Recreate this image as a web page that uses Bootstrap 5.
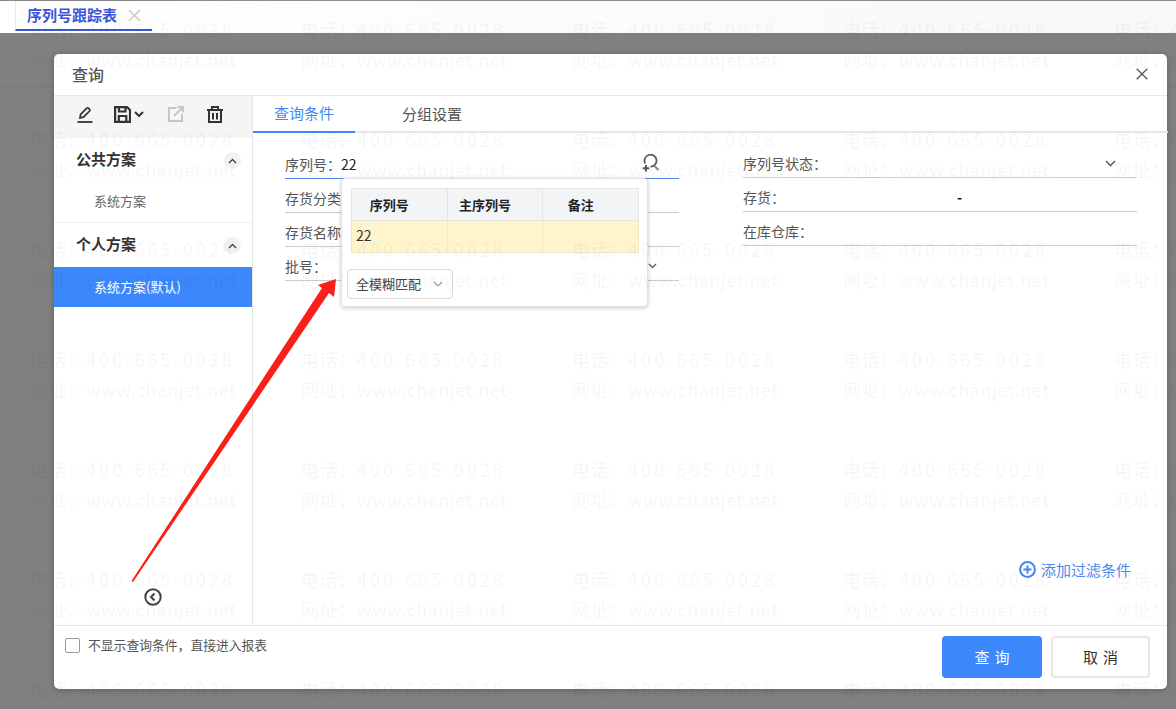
<!DOCTYPE html>
<html lang="zh">
<head>
<meta charset="utf-8">
<title>序列号跟踪表</title>
<link href="https://cdn.jsdelivr.net/npm/bootstrap@5.3.0/dist/css/bootstrap.min.css" rel="stylesheet">
<style>
html,body{height:100%;margin:0;overflow:hidden}
body{font-family:"Noto Sans CJK SC","Liberation Sans",sans-serif;font-size:14px;color:#555;background:#808080}
.shell{position:relative;width:1176px;height:709px;overflow:hidden}
.topbar{height:33px;background:linear-gradient(90deg,#fff,#f8f8f8);border-top:1px solid #8a8a8a;padding-left:15px}
.toptab{width:137px;height:30px;border-left:1px solid #e8e8e8;border-bottom:2px solid #3a55d8;padding-left:11px;gap:11px;color:#3a55d8;font-size:15px;font-weight:700;line-height:26px}
.veil{height:676px;padding:21px 9px 20px 54px;background:linear-gradient(#808080 53px,#777 53px,#777 54px,#808080 54px)}
.dlg{height:635px;background:#fff;border-radius:5px;box-shadow:0 1px 6px rgba(0,0,0,.25)}
.dlg-head{height:42px;padding:0 19px 2px 18px;border-bottom:1px solid #e8e8e8}
.dlg-title{font-size:16px;font-weight:500;color:#555}
.dlg-mid{height:529px}
.side{width:199px;border-right:1px solid #e8e8e8}
.tools{height:42px;background:#f5f5f5;padding:0 0 6px 23px}
.ic-pen{margin-right:21px}
.ic-caret{margin:0 24px 0 3px}
.ic-out{margin-right:23px}
.grp{height:42px;padding:0 11px 0 22px;font-size:15px;font-weight:700;color:#333}
.grp-b{height:44px;padding-bottom:2px}
.knob{width:17px;height:17px;margin-top:3px;border-radius:50%;background:#f1f1f1}
.plan{height:40px;padding-left:40px;padding-bottom:1px;font-size:13px;color:#666}
.plan-on{background:#3b87fb;color:#fff}
.plan-a{height:42px}
.sep{border-top:1px solid #f0f0f0}
.collapse-row{height:50px;padding-left:90px;padding-bottom:6px}
.tabs{height:37px;border-bottom:2px solid #e6e6e6}
.tabx{width:102px;height:37px;margin-bottom:-2px;font-size:15px;color:#555}
.tabx-b{margin-left:26px}
.tabx-on{color:#3f87f5;border-bottom:2px solid #3f87f5}
.fields{padding:12px 31px 0 32px;gap:64px}
.fcol{width:394px}
.fcol-r{margin-top:-1px}
.frow{height:34px;border-bottom:1px solid #ccc;padding:6px 0 1px}
.frow-on{border-bottom-color:#4a8af0}
.val{color:#222}
.dash{position:absolute;left:214px;color:#111;font-weight:700}
.find{margin-right:19px;margin-top:-2px}
.chev-l{margin-right:22px}
.chev-r{margin-right:21px}
.popup{position:absolute;left:56px;top:33px;width:307px;height:129px;background:#fff;border:1px solid #e2e2e2;border-radius:4px;box-shadow:0 1px 4px rgba(0,0,0,.22);padding:9px 9px 0 9px}
.popup .tbl{width:288px;margin:0;border-collapse:collapse;table-layout:fixed;font-size:13px}
.tbl th{height:32px;background:#f3f4f6;border:1px solid #e6e6e6;text-align:center;padding:0 20px 0 0;color:#222;font-weight:700}
.tbl td{height:32px;background:#fff5cc;border:1px solid #efe8c8;padding:0 0 2px 4px;color:#333;font-size:14px}
.picker{width:106px;height:30px;margin:16px 0 0 -4px;border:1px solid #ddd;border-radius:4px;padding:0 9px 0 8px;font-size:13px;color:#444}
.addf{padding:0 37px 44px 0;color:#4a8af0;font-size:15px;gap:5px}
.dlg-foot{height:64px;border-top:1px solid #e8e8e8;padding:10px 17px 0 11px}
.tick{width:15px;height:15px;border:1px solid #999;border-radius:2px;margin-right:8px}
.foot-label{font-size:12.800px;color:#555;margin-top:-1px}
.btn-q,.btn-c{height:42px;border-radius:4px;font-size:15px;letter-spacing:5px;padding:0 0 0 5px}
.btn-q{width:100px;background:#3b87fb;border:0;color:#fff;margin-right:9px}
.btn-c{width:99px;background:#fff;border:2px solid #e6e6e6;color:#333}
.wm{position:absolute;inset:0;padding:14px 0 0 30px;display:grid;grid-template-columns:repeat(5,271px);grid-auto-rows:110px;pointer-events:none;font-size:18px;font-weight:500;line-height:30px;letter-spacing:.6px;color:rgba(0,0,0,.045);white-space:nowrap;overflow:hidden}
.wm-num{letter-spacing:2.800px}
.wm-url{letter-spacing:.25px}
.arrow{position:absolute;left:0;top:0;pointer-events:none}
</style>
</head>
<body>
<div class="shell">
  <div class="topbar">
    <div class="toptab d-flex align-items-center">
      <span>序列号跟踪表</span>
      <svg width="13" height="13" viewBox="0 0 13 13"><path d="M1 1l11 11M12 1L1 12" stroke="#c8c8c8" stroke-width="1.400" fill="none"/></svg>
    </div>
  </div>
  <div class="veil">
    <div class="dlg d-flex flex-column">
      <div class="dlg-head d-flex align-items-center justify-content-between">
        <div class="dlg-title">查询</div>
        <svg width="12" height="12" viewBox="0 0 12 12"><path d="M.7.7l10.600 10.600M11.300.7L.7 11.300" stroke="#555" stroke-width="1.300" fill="none"/></svg>
      </div>
      <div class="dlg-mid d-flex">
        <div class="side d-flex flex-column flex-shrink-0">
          <div class="tools d-flex align-items-center">
            <svg class="ic-pen" width="16" height="17" viewBox="0 0 16 17" fill="none" stroke="#333"><path d="M3 12l.6-3.600L9.800 2.200a1.200 1.200 0 0 1 1.700 0l1.100 1.100a1.200 1.200 0 0 1 0 1.700L6.400 11.200z" stroke-width="1.700"/><path d="M0.500 16h15" stroke-width="1.800"/></svg>
            <svg width="17" height="17" viewBox="0 0 17 17" fill="none" stroke="#333" stroke-width="2.200"><path d="M1.100 1.100h12L16 4v11.900H1.100z"/><path d="M5 1.100v4.400h6.500V1.100M4.800 15.900V10h7.500v5.900"/></svg>
            <svg class="ic-caret" width="10" height="6" viewBox="0 0 10 6" fill="none" stroke="#333" stroke-width="2"><path d="M1 1l4 4 4-4"/></svg>
            <svg class="ic-out" width="16" height="16" viewBox="0 0 16 16" fill="none" stroke="#c6c6c6" stroke-width="2"><path d="M8.500 2H1v13h13V8"/><path d="M6 10l8.500-8.500M9.500 1.100H15v5.500"/></svg>
            <svg width="16" height="17" viewBox="0 0 16 17" fill="none" stroke="#333" stroke-width="2"><path d="M0 4h16M5 4V1.100h6V4M2 4v12h12V4M6 7v6.500M10 7v6.500"/></svg>
          </div>
          <div class="grp d-flex align-items-center justify-content-between">
            <span>公共方案</span>
            <span class="knob d-flex align-items-center justify-content-center"><svg width="9" height="6" viewBox="0 0 9 6" fill="none" stroke="#444" stroke-width="1.400"><path d="M1 5l3.500-3.500L8 5"/></svg></span>
          </div>
          <div class="plan plan-a d-flex align-items-center">系统方案</div>
          <div class="sep"></div>
          <div class="grp grp-b d-flex align-items-center justify-content-between">
            <span>个人方案</span>
            <span class="knob d-flex align-items-center justify-content-center"><svg width="9" height="6" viewBox="0 0 9 6" fill="none" stroke="#444" stroke-width="1.400"><path d="M1 5l3.500-3.500L8 5"/></svg></span>
          </div>
          <div class="plan plan-on d-flex align-items-center">系统方案(默认)</div>
          <div class="collapse-row mt-auto d-flex align-items-center">
            <svg width="18" height="18" viewBox="0 0 18 18" fill="none" stroke="#444"><circle cx="9" cy="9" r="7.700" stroke-width="2"/><path d="M10.500 5.500L7 9l3.500 3.500" stroke-width="2"/></svg>
          </div>
        </div>
        <div class="flex-grow-1 d-flex flex-column">
          <div class="tabs d-flex">
            <div class="tabx tabx-on d-flex align-items-center justify-content-center">查询条件</div>
            <div class="tabx tabx-b d-flex align-items-center justify-content-center">分组设置</div>
          </div>
          <div class="fields d-flex">
            <div class="fcol position-relative">
              <div class="frow frow-on d-flex align-items-center justify-content-between">
                <span>序列号：<span class="val">22</span></span>
                <svg class="find" width="18" height="18" viewBox="0 0 18 18" fill="none" stroke="#555" stroke-width="1.700"><path d="M3.200 9.500A6 6 0 1 1 8.500 12.700"/><path d="M12 11.500l4.500 4.500" stroke="#888" stroke-width="2"/><path d="M4 11v6.500M.8 14.200h6.400" stroke-width="1.900"/></svg>
              </div>
              <div class="frow d-flex align-items-center">存货分类</div>
              <div class="frow d-flex align-items-center">存货名称</div>
              <div class="frow d-flex align-items-center justify-content-between">
                <span>批号：</span>
                <svg class="chev-l" width="9" height="6" viewBox="0 0 9 6" fill="none" stroke="#666" stroke-width="1.500"><path d="M1 1l3.500 3.500L8 1"/></svg>
              </div>
              <div class="popup">
                <table class="tbl">
                  <thead><tr><th>序列号</th><th>主序列号</th><th>备注</th></tr></thead>
                  <tbody><tr><td>22</td><td></td><td></td></tr></tbody>
                </table>
                <div class="picker d-flex align-items-center justify-content-between">
                  <span>全模糊匹配</span>
                  <svg width="10" height="6" viewBox="0 0 10 6" fill="none" stroke="#999" stroke-width="1.100"><path d="M1 1l4 4 4-4"/></svg>
                </div>
              </div>
            </div>
            <div class="fcol fcol-r">
              <div class="frow d-flex align-items-center justify-content-between">
                <span>序列号状态：</span>
                <svg class="chev-r" width="11" height="7" viewBox="0 0 11 7" fill="none" stroke="#666" stroke-width="1.700"><path d="M1 1l4.500 4.500L10 1"/></svg>
              </div>
              <div class="frow d-flex align-items-center position-relative"><span>存货：</span><span class="dash">-</span></div>
              <div class="frow d-flex align-items-center">在库仓库：</div>
            </div>
          </div>
          <div class="addf mt-auto d-flex align-items-center justify-content-end">
            <svg width="17" height="17" viewBox="0 0 17 17" fill="none" stroke="#3f87f5" stroke-width="2"><circle cx="8.500" cy="8.500" r="7.400"/><path d="M4.500 8.500h8M8.500 4.500v8"/></svg>
            <span>添加过滤条件</span>
          </div>
        </div>
      </div>
      <div class="dlg-foot d-flex justify-content-between align-items-start">
        <div class="d-flex align-items-center"><span class="tick d-inline-block"></span><span class="foot-label">不显示查询条件，直接进入报表</span></div>
        <div class="d-flex">
          <button type="button" class="btn btn-q">查询</button>
          <button type="button" class="btn btn-c">取消</button>
        </div>
      </div>
    </div>
  </div>
  <div class="wm" id="wm"></div>
  <svg class="arrow" width="1176" height="709" viewBox="0 0 1176 709"><polygon points="336,279 334,297 329,293 133,582 131.500,581 322,288 318,285" fill="#fb1f1a"/></svg>
</div>
<script>
var h='';for(var i=0;i<35;i++){h+='<div>电话：<span class="wm-num">400-665-0028</span><br>网址：<span class="wm-url">www.chanjet.net</span></div>';}
document.getElementById('wm').innerHTML=h;
</script>
<script src="https://cdn.jsdelivr.net/npm/bootstrap@5.3.0/dist/js/bootstrap.bundle.min.js"></script>
</body>
</html>
